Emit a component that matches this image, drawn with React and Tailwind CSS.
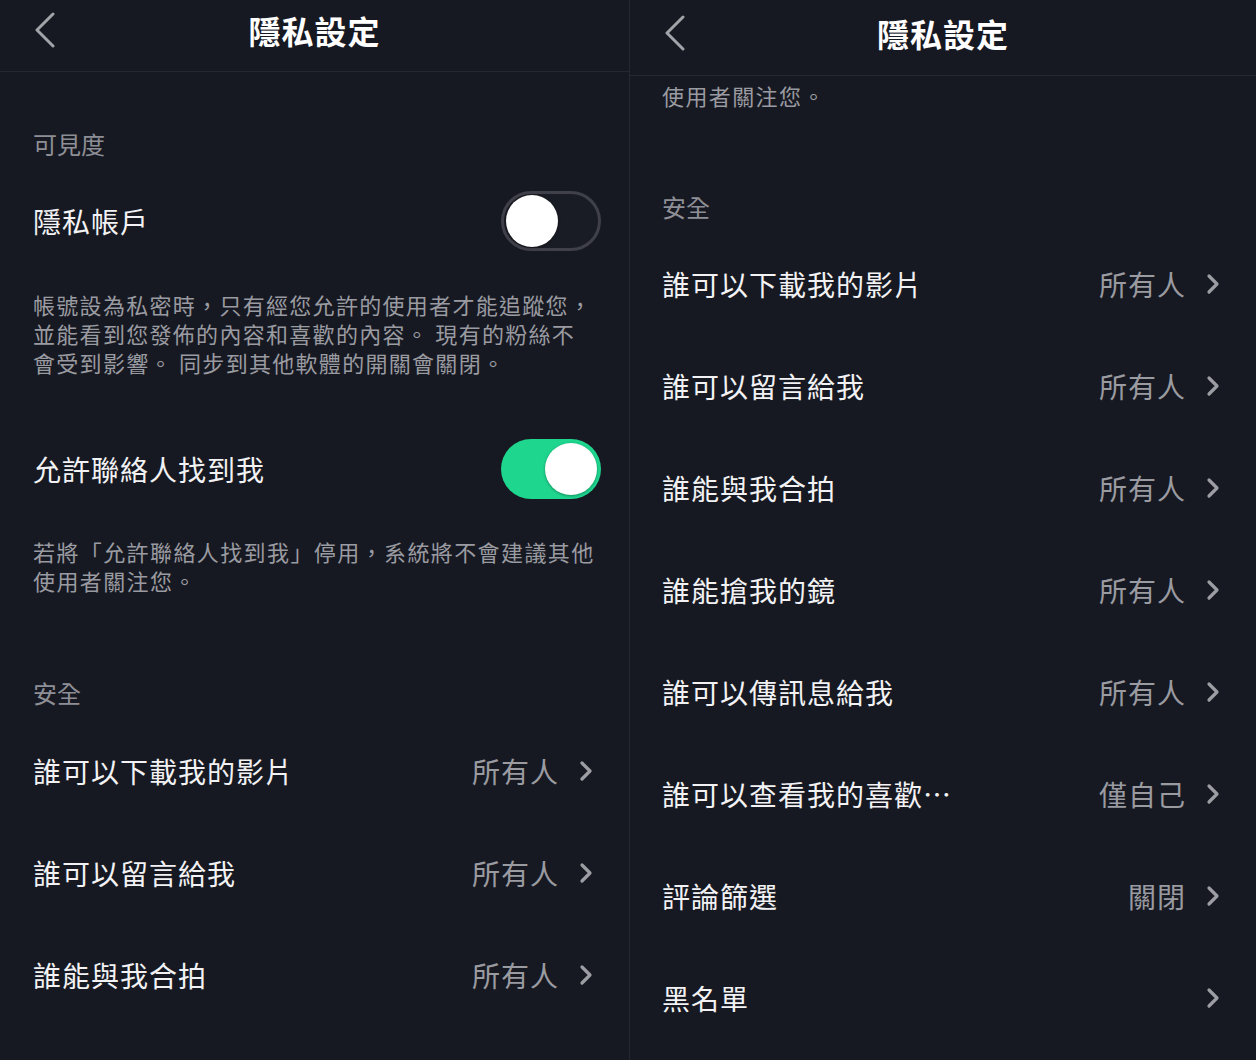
import React from "react"

const FONT = { fontFamily: '"Noto Sans CJK TC", "Noto Sans CJK SC", "Noto Sans", sans-serif' }

function BackIcon() {
    return (
        <svg width="22" height="36" viewBox="0 0 22 36" fill="none">
            <polyline points="19,2 3,18 19,34" stroke="#a3a4aa" strokeWidth="3" strokeLinecap="round" strokeLinejoin="round" />
        </svg>
    )
}

function Chevron() {
    return (
        <svg width="14" height="22" viewBox="0 0 14 22" fill="none">
            <polyline points="3,3 11,11 3,19" stroke="#9d9ea4" strokeWidth="3.2" strokeLinecap="round" strokeLinejoin="round" />
        </svg>
    )
}

function Header({ height, pad }) {
    return (
        <div className={`relative flex items-center justify-center border-b border-[#252733] ${height} ${pad}`}>
            <div className="pl-[34px] absolute left-0">
                <BackIcon />
            </div>
            <h1 className="text-[32px] leading-[40px] font-bold text-white tracking-[1px]">隱私設定</h1>
        </div>
    )
}

function Toggle({ on }) {
    if (on) {
        return (
            <div className="w-[100px] h-[60px] rounded-full bg-[#1fd68f] flex items-center justify-end p-[4px]">
                <div className="w-[52px] h-[52px] rounded-full bg-white shadow-[0_1px_3px_rgba(0,0,0,0.35)]" />
            </div>
        )
    }
    return (
        <div className="w-[100px] h-[60px] rounded-full border-[3px] border-[#3f4049] bg-[#1a1c25] flex items-center justify-start p-[2px]">
            <div className="w-[52px] h-[52px] rounded-full bg-white shadow-[0_1px_3px_rgba(0,0,0,0.35)]" />
        </div>
    )
}

function SectionTitle({ children }) {
    return <div className="h-[48px] flex items-center text-[24px] text-[#8e8f96]">{children}</div>
}

function Row({ label, value }) {
    return (
        <div className="h-[102px] flex items-center justify-between">
            <span className="text-[28px] text-[#f2f2f4] tracking-[1px]">{label}</span>
            <div className="flex items-center gap-[20px]">
                {value && <span className="text-[28px] text-[#9a9ba1] tracking-[1px]">{value}</span>}
                <Chevron />
            </div>
        </div>
    )
}

function LeftPanel() {
    return (
        <div className="w-[629px] h-[1060px] overflow-hidden">
            <Header height="h-[72px]" pad="pb-[12px]" />
            <div className="pl-[33px] pr-[28px] pt-[48px]">
                <SectionTitle>可見度</SectionTitle>
                <div className="mt-[23px] h-[60px] flex items-center justify-between">
                    <span className="text-[28px] text-[#f2f2f4] tracking-[1px]">隱私帳戶</span>
                    <Toggle on={false} />
                </div>
                <p className="mt-[39px] text-[22px] leading-[29px] text-[#9a9ba1] tracking-[1.3px] whitespace-nowrap">
                    帳號設為私密時，只有經您允許的使用者才能追蹤您，
                    <br />
                    並能看到您發佈的內容和喜歡的內容。 現有的粉絲不
                    <br />
                    會受到影響。 同步到其他軟體的開關會關閉。
                </p>
                <div className="mt-[62px] h-[60px] flex items-center justify-between">
                    <span className="text-[28px] text-[#f2f2f4] tracking-[1px]">允許聯絡人找到我</span>
                    <Toggle on={true} />
                </div>
                <p className="mt-[38px] text-[22px] leading-[29px] text-[#9a9ba1] tracking-[1.4px] whitespace-nowrap">
                    若將「允許聯絡人找到我」停用，系統將不會建議其他
                    <br />
                    使用者關注您。
                </p>
                <div className="mt-[74px]">
                    <SectionTitle>安全</SectionTitle>
                </div>
                <div className="mt-[3px] pr-[8px]">
                    <Row label="誰可以下載我的影片" value="所有人" />
                    <Row label="誰可以留言給我" value="所有人" />
                    <Row label="誰能與我合拍" value="所有人" />
                </div>
            </div>
        </div>
    )
}

function RightPanel() {
    const rows = [
        ["誰可以下載我的影片", "所有人"],
        ["誰可以留言給我", "所有人"],
        ["誰能與我合拍", "所有人"],
        ["誰能搶我的鏡", "所有人"],
        ["誰可以傳訊息給我", "所有人"],
        ["誰可以查看我的喜歡…", "僅自己"],
        ["評論篩選", "關閉"],
        ["黑名單", ""],
    ]
    return (
        <div className="flex-1 h-[1060px] overflow-hidden">
            <Header height="h-[76px]" pad="pb-[10px]" />
            <div className="pl-[32px] pr-[36px]">
                <p className="mt-[5px] text-[22px] leading-[29px] text-[#9a9ba1] tracking-[1.4px]">使用者關注您。</p>
                <div className="mt-[73px]">
                    <SectionTitle>安全</SectionTitle>
                </div>
                <div className="mt-[2px]">
                    {rows.map(([label, value], index) => (
                        <Row key={index} label={label} value={value} />
                    ))}
                </div>
            </div>
        </div>
    )
}

export default function App() {
    return (
        <div className="w-[1256px] h-[1060px] bg-[#171922] flex" style={FONT}>
            <LeftPanel />
            <div className="w-[1px] bg-[#252733]" />
            <RightPanel />
        </div>
    )
}
